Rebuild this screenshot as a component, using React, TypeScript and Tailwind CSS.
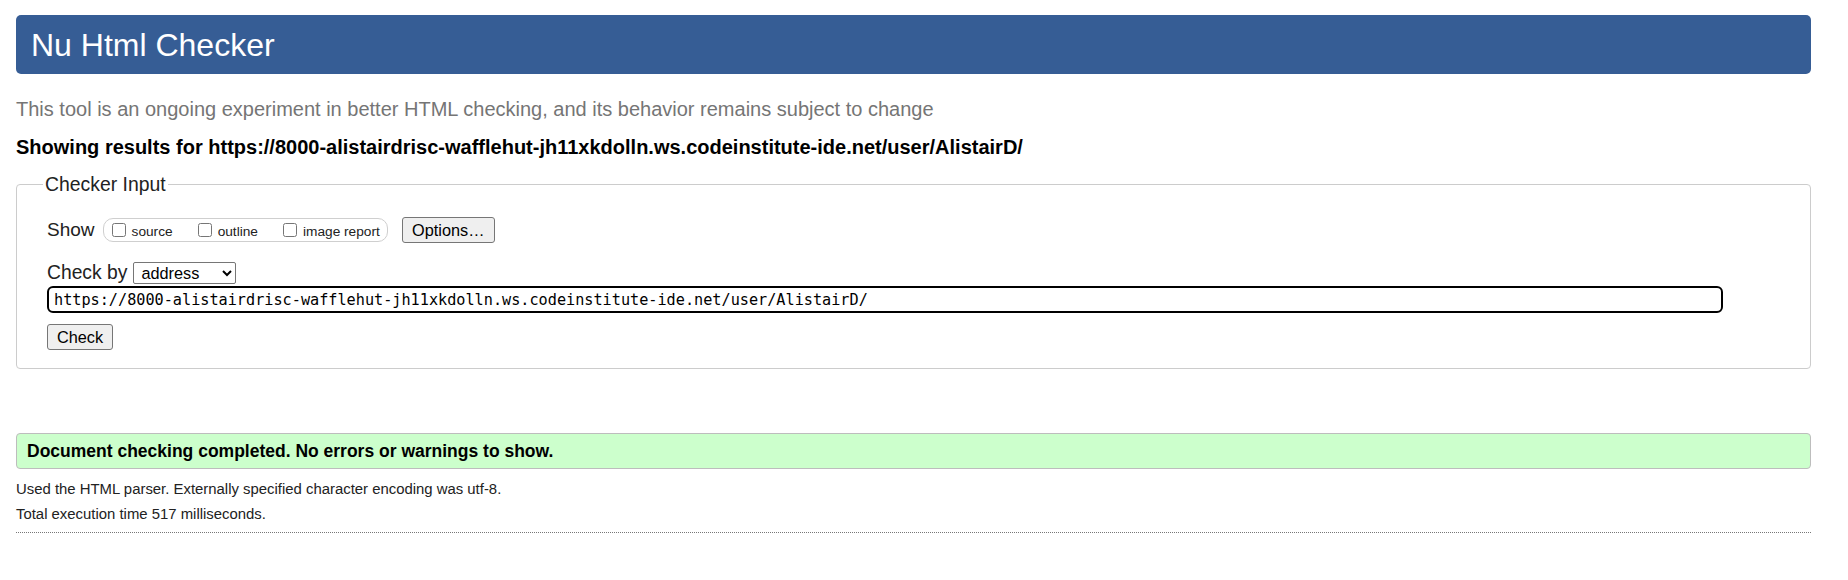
import React from "react";

const URL = "https://8000-alistairdrisc-wafflehut-jh11xkdolln.ws.codeinstitute-ide.net/user/AlistairD/";

const sans = "font-['Liberation_Sans',Arial,sans-serif]";

function ShowOption({ label }: { label: string }) {
  return (
    <label className="flex items-center gap-[6px]">
      <input type="checkbox" className="m-0 w-[14px] h-[14px]" />
      <span className="text-[13.7px] text-[#222] leading-none pt-[3px]">{label}</span>
    </label>
  );
}

export default function App() {
  return (
    <div className={`${sans} bg-white text-[#111] min-h-[580px] pl-[16px] pr-[37px] pt-[15px]`}>
      {/* header */}
      <div className="h-[59px] rounded-[5px] bg-[#365d95] flex items-center pl-[15px]">
        <h1 className="text-white text-[32px] leading-none">Nu Html Checker</h1>
      </div>

      <p className="mt-[23px] text-[20px] leading-[24px] text-[#757575]">
        This tool is an ongoing experiment in better HTML checking, and its behavior remains subject to change
      </p>
      <p className="mt-[14px] text-[20px] leading-[24px] font-bold text-black">
        Showing results for {URL}
      </p>

      {/* checker input */}
      <fieldset className="mt-[14px] border border-[#cccccc] rounded-[4px] px-[30px] pt-[22px] pb-[18px]">
        <legend className="-ml-[4px] px-[2px] text-[19.4px] leading-[22px] text-[#222]">Checker Input</legend>

        <div className="h-[26px] flex items-center">
          <span className="text-[19px] text-[#222]">Show</span>
          <div className="ml-[8px] h-[24px] flex items-center gap-[25px] border border-[#cfcfcf] rounded-[10px] pl-[8px] pr-[7px]">
            <ShowOption label="source" />
            <ShowOption label="outline" />
            <ShowOption label="image report" />
          </div>
          <button className="ml-[14px] h-[26px] w-[93px] bg-[#efefef] border border-[#767676] rounded-[3px] text-[16.3px] text-black">
            Options…
          </button>
        </div>

        <div className="mt-[19px] h-[22px] flex items-center">
          <span className="text-[19.3px] text-[#222]">Check by</span>
          <select
            defaultValue="address"
            className="ml-[6px] h-[22px] w-[103px] border border-[#767676] rounded-[2px] text-[16.3px] text-black pl-[3px] bg-white"
          >
            <option value="address">address</option>
            <option value="file">file upload</option>
            <option value="text">text input</option>
          </select>
        </div>

        <input
          readOnly
          value={URL}
          className="mt-[2px] block h-[27px] w-[1676px] border-2 border-black rounded-[6px] pl-[5px] font-['DejaVu_Sans_Mono',monospace] text-[15.2px] text-black outline-none"
        />

        <button className="mt-[11px] block h-[26px] w-[66px] bg-[#efefef] border border-[#767676] rounded-[3px] text-[16.3px] text-black">
          Check
        </button>
      </fieldset>

      {/* result */}
      <div className="mt-[64px] h-[36px] flex items-center bg-[#ccffcc] border border-[#bdbdbd] rounded-[4px] pl-[10px]">
        <p className="font-bold text-[17.5px] text-black">Document checking completed. No errors or warnings to show.</p>
      </div>

      <p className="mt-[8px] text-[14.9px] leading-[25px] text-[#222]">
        Used the HTML parser. Externally specified character encoding was utf-8.
      </p>
      <p className="text-[14.9px] leading-[25px] text-[#222]">Total execution time 517 milliseconds.</p>
      <div className="mt-[5px] border-t border-dotted border-[#777]" />
    </div>
  );
}
